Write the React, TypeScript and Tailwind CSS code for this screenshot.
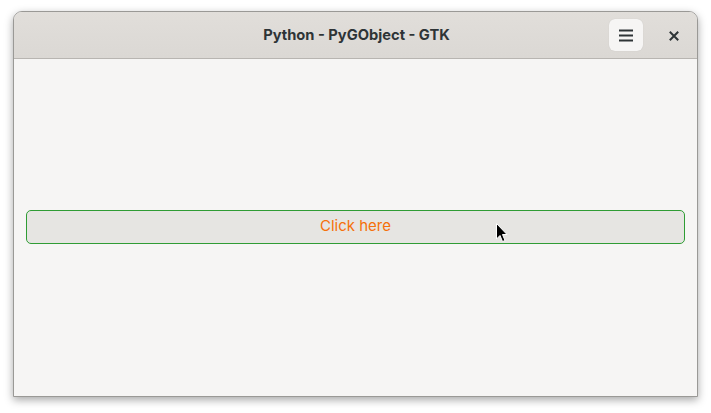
import React from "react";

export default function App() {
  return (
    <div className="w-[711px] h-[413px] bg-white relative overflow-hidden" style={{ fontFamily: "Inter, 'Noto Sans', sans-serif" }}>
      <div className="absolute left-[13px] top-[11px] w-[685px] h-[386px] rounded-t-[9px] border border-[#9a9996] shadow-[0_3px_9px_rgba(0,0,0,0.35)] flex flex-col overflow-hidden bg-[#f6f5f4]">
        <div className="h-[47px] shrink-0 bg-gradient-to-b from-[#e1deda] to-[#dbd8d4] border-b border-[#b8b5b1] flex items-center relative">
          <div className="flex-1 text-center text-[14.7px] font-bold text-[#2e3436] pl-[2px]">Python - PyGObject - GTK</div>
          <div className="absolute left-[595px] top-[7px] w-[34px] h-[32px] rounded-[6px] bg-[#f6f5f4] shadow-[0_0_1px_rgba(0,0,0,0.15)] flex items-center justify-center">
            <svg width="16" height="14" viewBox="0 0 16 14">
              <rect x="1" y="1.5" width="14" height="2" fill="#2e3436" />
              <rect x="1" y="6.5" width="14" height="2" fill="#2e3436" />
              <rect x="1" y="11.5" width="14" height="2" fill="#2e3436" />
            </svg>
          </div>
          <div className="absolute left-[655px] top-[19px] w-[10px] h-[10px] flex items-center justify-center">
            <svg width="10" height="10" viewBox="0 0 10 10">
              <path d="M1.5 1.5 L8.5 8.5 M8.5 1.5 L1.5 8.5" stroke="#2e3436" strokeWidth="2" strokeLinecap="square" />
            </svg>
          </div>
        </div>
        <div className="flex-1 flex flex-col justify-center px-[12px] pb-[2px]">
          <button className="h-[34px] w-full rounded-[5px] border border-[#2f9c34] bg-[#e6e5e2] text-[15px] text-[#f5700a] flex items-center justify-center">
            Click here
          </button>
        </div>
      </div>
      <svg className="absolute left-[495px] top-[222px]" width="14" height="22" viewBox="0 0 14 22">
        <path d="M1.5 1.5 L1.5 17 L5 13.5 L7.5 19.5 L10 18.5 L7.5 12.5 L12 12.5 Z" fill="#000" stroke="#fff" strokeWidth="1" strokeLinejoin="round" />
      </svg>
    </div>
  );
}
